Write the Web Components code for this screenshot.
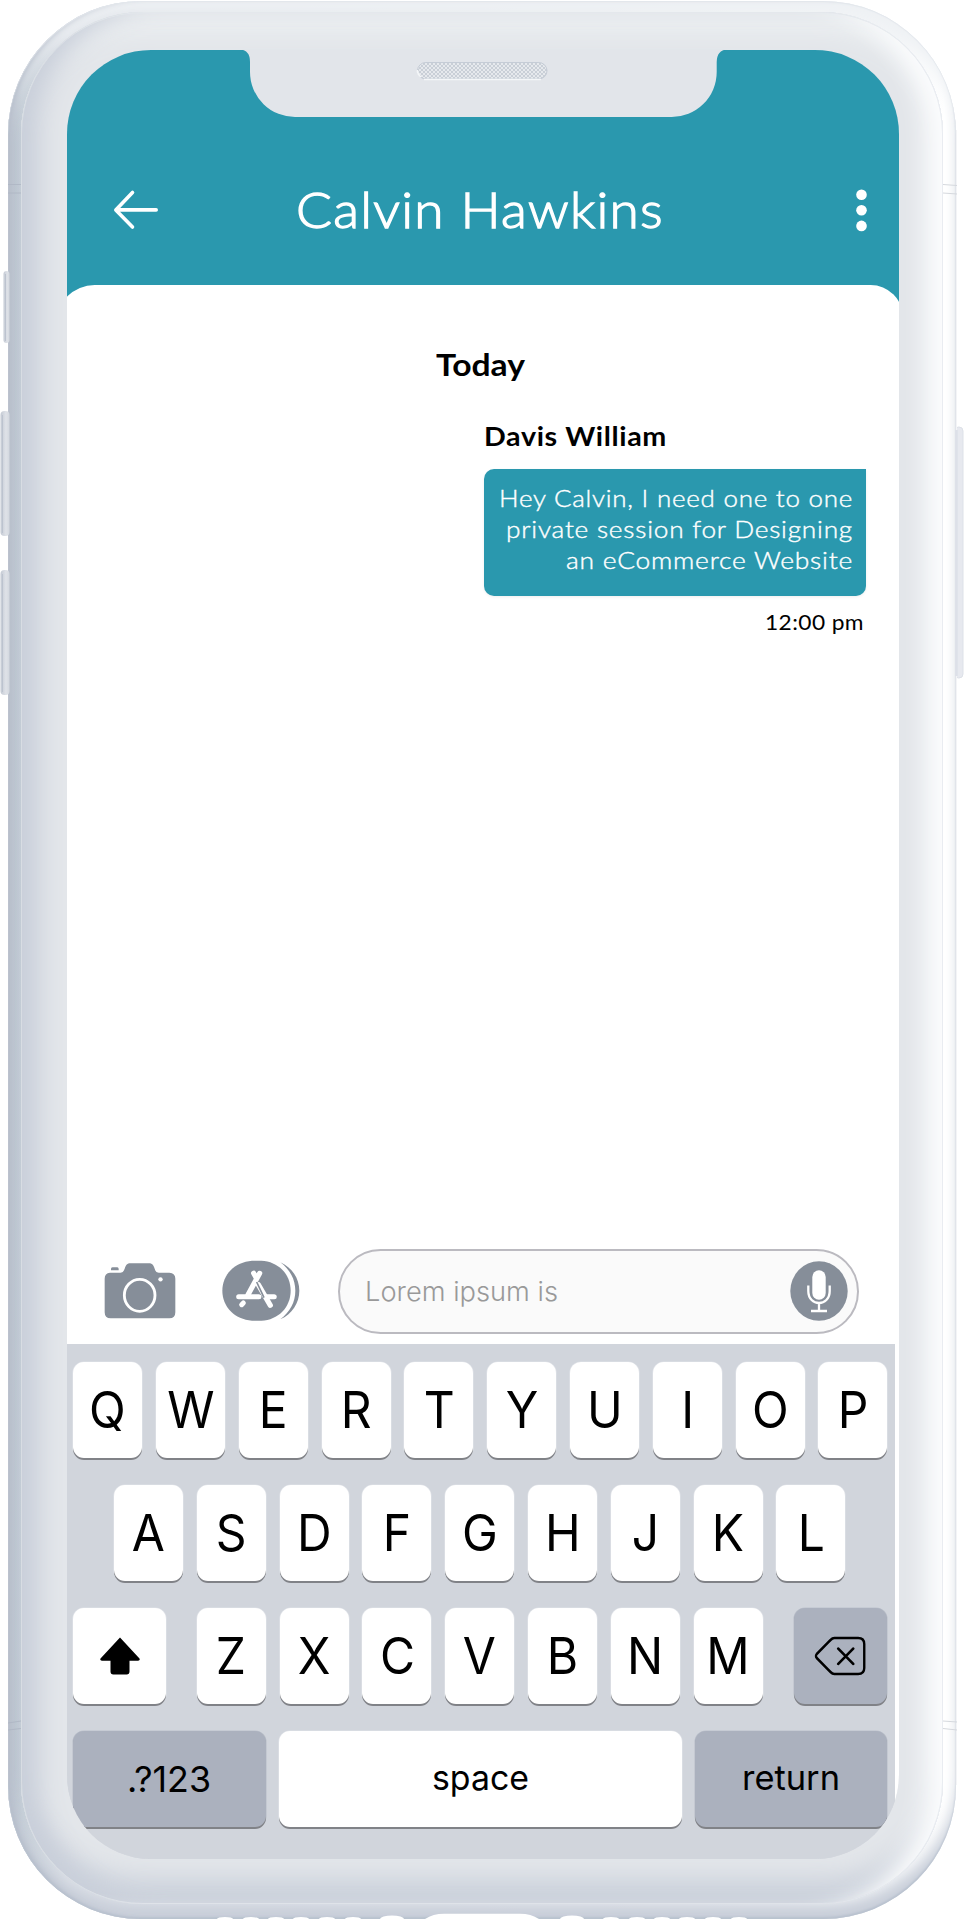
<!DOCTYPE html>
<html lang="en">
<head>
<meta charset="utf-8">
<title>Chat</title>
<style>
html,body{margin:0;padding:0;background:#fff}
body{width:965px;height:1919px;overflow:hidden;font-family:Lato,"Open Sans",sans-serif}
</style>
</head>
<body>
<phone-frame>
  <chat-header><fit-text w="368" style="font-size:50px;font-weight:300;letter-spacing:1.2px;-webkit-text-stroke:1.3px #fff">Calvin Hawkins</fit-text></chat-header>
  <chat-panel>
    <fit-text slot="day" w="89" style="font-size:30px;font-weight:700">Today</fit-text>
    <chat-message>
      <fit-text slot="author" w="183" style="font-size:27px;font-weight:700;letter-spacing:.6px">Davis William</fit-text>
      <fit-text w="354">Hey Calvin, I need one to one</fit-text>
      <fit-text w="347">private session for Designing</fit-text>
      <fit-text w="287">an eCommerce Website</fit-text>
      <fit-text slot="time" w="99" style="font-size:22px;letter-spacing:.4px">12:00 pm</fit-text>
    </chat-message>
    <message-composer slot="composer"><fit-text w="193">Lorem ipsum is</fit-text></message-composer>
  </chat-panel>
  <ios-keyboard></ios-keyboard>
</phone-frame>
<script>
class Base extends HTMLElement{
  constructor(){super();this.attachShadow({mode:'open'}).innerHTML=this.constructor.html;}
}
const def=(name,html,ready)=>customElements.define(name,class extends Base{
  static html=html;
  connectedCallback(){if(ready)ready.call(this)}
});

def('phone-frame',`<style>
:host{display:block;position:relative;width:965px;height:1919px;overflow:hidden}
.shell{box-sizing:border-box;width:948.5px;height:1917.5px;margin:1px 0 0 7.5px;position:absolute;top:0;left:0;border-radius:133px;padding:11px 13px 15px 13.5px;display:flex;
 background:linear-gradient(90deg,#b3bbc9 0,#b9c2ce 6px,#c5ced7 14px,#dfe3e9 60px,#e9ecf0 50%,#f4f6f8 890px,#fff 936px);
 box-shadow:inset 0 1px 1px #e3e7ec,inset 0 -2px 2px #b9c2cf,inset 7px 0 7px -4px #b0b8c6,inset 0 14px 14px -3px #eef1f4,inset 0 -18px 14px -3px #c8ced9}
.face{flex:1;border-radius:122px;background:#e3e6ea;
 box-shadow:inset 1px 0 0 #d8dde3,inset -1px 0 0 #e9ecf1,inset 0 1px 0 #e4e8ec,inset 0 -1px 0 #dfe3e9,inset -30px 0 22px -12px #fbfcfd,inset 24px 0 24px -6px #c9cfda,inset 0 -34px 24px -8px #ccd2dc,inset 0 24px 22px -4px #edf0f2}
.screen{position:absolute;left:66.500px;top:50px;width:832px;height:1808.5px;border-radius:84px;overflow:hidden;background:linear-gradient(#2a98ae 50%,#d1d5dc 50%);display:flex;flex-direction:column;transform:translateZ(0)}
svg{position:absolute;left:0;top:0}
</style>
<svg width="965" height="1919" viewBox="0 0 965 1919" fill="none">
 <rect x="954.5" y="427" width="8.500" height="251" rx="4" fill="#e7e9ef" stroke="#dde1e8"/>
 <path d="M956.500 130V1785" stroke="#f3f4f6"/>
</svg>
<div class="shell"><div class="face"></div></div>
<div class="screen"><slot></slot></div>
<svg width="965" height="1919" viewBox="0 0 965 1919" fill="none">
 <defs><pattern id="mesh" width="4" height="4" patternUnits="userSpaceOnUse"><rect width="4" height="4" fill="#e6e9ed"/><path d="M-1 -1L5 5M5 -1L-1 5" stroke="#c6ccd5" stroke-width=".9"/></pattern>
 <linearGradient id="k"><stop stop-color="#c3c9d3"/><stop offset=".6" stop-color="#dfe2e8"/><stop offset="1" stop-color="#d3d8df"/></linearGradient></defs>
 <path d="M240 49.500Q250 50 250 62V72A45 45 0 0 0 296 117H671A45 45 0 0 0 716.700 72V62Q717 50 727 49.500Z" fill="#e2e5ea"/>
 <rect x="417.500" y="62.500" width="129.500" height="16.500" rx="8.250" fill="url(#mesh)" stroke="#c5ccd6"/>
 <path d="M421 77Q417 74 417.500 70M424 79.500H541" stroke="#f4f6f8" stroke-width="1.500"/>
 <g fill="url(#k)"><rect x="3.500" y="271" width="6" height="72" rx="3"/><rect x=".5" y="411" width="9" height="125" rx="4"/><rect x=".5" y="570" width="9" height="125" rx="4"/></g>
 <path d="M5.500 274V341M2.500 415V533M2.500 574V692" stroke="#bcc3cf"/>
 <path d="M956.500 430V676" stroke="#dde0e8" stroke-width="2.500"/>
 <path d="M8 184.500H21M8 193H21M8 1723L21 1721M8 1730L21 1728.500" stroke="#adb5c3" stroke-width=".8"/>
 <path d="M943 184.500L957 185.500M943 193L957 194M943 1721L957 1722M943 1728.500L957 1730" stroke="#d5d8dd" stroke-width="1"/>
 <g fill="#fff"><path d="M425 1919Q433 1913.700 444 1913.700H520Q531 1913.700 539 1919Z"/>
 <ellipse cx="392" cy="1919" rx="12" ry="3.500"/><ellipse cx="572" cy="1919" rx="12" ry="3.500"/>
 <g id="d"><ellipse cx="225" cy="1919" rx="8" ry="2"/><ellipse cx="251" cy="1919" rx="8" ry="2"/><ellipse cx="276" cy="1919" rx="8" ry="2"/><ellipse cx="301" cy="1919" rx="8" ry="2"/><ellipse cx="327" cy="1919" rx="8" ry="2"/><ellipse cx="353" cy="1919" rx="8" ry="2"/></g><use href="#d" x="386"/></g>
</svg>`);

def('chat-header',`<style>
:host{display:grid;grid-template-columns:46px 1fr 11px;flex:none;box-sizing:border-box;height:235px;padding:128.500px 32px 0 46.500px;align-items:start;color:#fff}
svg{display:block}.t{line-height:60px;text-align:center;padding-right:54px}
</style>
<svg width="46" height="60" viewBox="0 0 46 60" fill="none" stroke="#fff" stroke-width="3.600" stroke-linecap="round" stroke-linejoin="round"><path d="M43.200 30.900H3M19.500 13.500L2.800 30.900L19.500 48"/></svg>
<div class="t"><slot></slot></div>
<svg width="11" height="60" viewBox="0 0 11 60" fill="#fff"><circle cx="5.500" cy="15.700" r="5.300"/><circle cx="5.500" cy="31.300" r="5.300"/><circle cx="5.500" cy="46.900" r="5.300"/></svg>`);

def('chat-panel',`<style>
:host{display:flex;flex:none;flex-direction:column;box-sizing:border-box;height:1058.500px;margin:0 -4px 0 -11px;padding:60.500px 4px 0 11px;background:#fff;border-radius:38.700px 32.400px 0 0;color:#000}
.day{text-align:center;line-height:36px;height:36px;padding-right:5px}
.c{margin-top:auto}
</style><div class="day"><slot name="day"></slot></div><slot></slot><div class="c"><slot name="composer"></slot></div>`);

def('chat-message',`<style>
:host{display:flex;flex-direction:column;width:382px;margin:38.500px 32.500px 0 auto}
.a{line-height:32px;height:32px;margin-bottom:17px}
.b{box-sizing:border-box;height:126.500px;padding:13px 13px 0 0;background:#2a98ae;border-radius:10px 0 10px 10px;color:#fff;font-size:24px;font-weight:300;-webkit-text-stroke:.4px #fff;letter-spacing:.7px;line-height:31px;display:flex;flex-direction:column;align-items:flex-end;box-shadow:0 1px 3px #0001}
.t{line-height:26px;margin-top:13px;text-align:right;padding-right:2px}
</style><div class="a"><slot name="author"></slot></div><div class="b"><slot></slot></div><div class="t"><slot name="time"></slot></div>`);

def('message-composer',`<style>
:host{display:flex;align-items:center;height:84.500px;padding:0 40px 9.500px 37.200px}
svg{display:block;flex:none}
.app{margin:0 38.300px 0 46px}
.cam,.app{position:relative;top:-1px}
.f{flex:1;box-sizing:border-box;height:85px;border:2px solid #bbbac0;border-radius:43px;background:#fafafa;display:flex;align-items:center;justify-content:space-between;padding:0 8.500px 1px 25px;font:300 27px Inter,sans-serif;color:#999}
</style>
<svg class="cam" width="72" height="61.330" viewBox="26 28 216 184"><path fill="#868e99" d="M47 54Q48 50 52 50H65Q69 50 70 54V59H47ZM44 66H72C82 66 84 63 88 54C92 43 95 38 106 38H160C171 38 174 43 178 54C181 63 184 66 194 66H222Q240 67 240 84V185Q240 203 222 203H46Q28 203 28 185V84Q28 67 44 66Z"/><ellipse cx="133" cy="134" rx="46" ry="48" fill="none" stroke="#fff" stroke-width="8.500"/><circle cx="195.500" cy="86" r="6.500" fill="#fff"/></svg>
<svg class="app" width="78" height="61.330" viewBox="380 28 234 184"><path fill="#868e99" d="M470 30H498C548 32 586 70 586 120C586 170 548 208 498 210H470C418 206 381 168 381 120C381 72 418 34 470 30Z"/><path fill="#868e99" d="M555 35C590 51 612 83 612 120C612 157 590 190 555 206C584 183 600 155 600 120C600 86 584 57 555 35Z"/><g fill="none" stroke="#fff" stroke-linecap="round"><path stroke-width="15" d="M430 138H491M515 138H537M439 162L444 157"/><path stroke-width="15.500" d="M493 68L458 132M475 68L483 82M489 102L525 164"/></g><path d="M484 94L506 141" stroke="#868e99" stroke-width="5" fill="none"/></svg>
<div class="f"><slot></slot><svg width="58" height="60" viewBox="0 0 58 60"><ellipse cx="29" cy="30" rx="28.700" ry="29.700" fill="#868e99"/><rect x="22.300" y="9.300" width="13.400" height="29.500" rx="6.700" fill="#fff"/><path d="M18.300 24.500V30C18.300 46 39.700 46 39.700 30V24.500M29 42V50M21 50H37" fill="none" stroke="#fff" stroke-width="2.300"/></svg></div>`);

def('key-cap',`<style>
:host{display:flex;flex:none;box-sizing:border-box;width:69px;height:96px;border-radius:11px;background:#fff;box-shadow:0 2px 0 #808287,0 0 0 .6px #e0e3e8;align-items:center;justify-content:center;font:400 50.500px/60px Inter,"Liberation Sans",sans-serif;color:#000}
:host([wide]){width:92.600px}:host([side]){width:192.400px}:host([grow]){flex:1}
:host([dark]){background:#abb1be;box-shadow:0 2px 0 #808287,0 0 0 .6px #bcc1cb}
span{display:block;transform:scaleX(.95)}
:host([word]) span{transform:none;font-size:35px}
::slotted(svg){display:block}
</style><span><slot></slot></span>`);

def('ios-keyboard',`<style>
:host{display:flex;flex:none;flex-direction:column;box-sizing:border-box;gap:27px;height:515px;padding:18px 11.300px 0 6.800px;background:linear-gradient(90deg,#d1d5dc 828px,#fff 828px)}
.r{display:flex;height:96.200px;gap:13.800px}
.r2{padding-left:40.700px}.z{margin-left:17.200px}.x{margin-left:17.500px}.r4{gap:13px}
.up{position:relative;top:-2px}
</style>
<div class="r" id="a"></div><div class="r r2" id="b"></div><div class="r" id="c"></div>
<div class="r r4"><key-cap side dark word><fit-text w="84" style="font-size:36px">.?123</fit-text></key-cap><key-cap grow word><fit-text class="up" w="97">space</fit-text></key-cap><key-cap side dark word><fit-text class="up" w="98">return</fit-text></key-cap></div>`,function(){
  const R=this.shadowRoot,row=s=>[...s].map(c=>`<key-cap>${c}</key-cap>`).join('');
  R.getElementById('a').innerHTML=row('QWERTYUIOP');
  R.getElementById('b').innerHTML=row('ASDFGHJKL');
  R.getElementById('c').innerHTML=`<key-cap wide><svg width="46" height="40" viewBox="0 0 46 40"><path d="M23 1.500L2.500 22.500Q1.500 24.500 4 24.800H13V35.500Q13 38.500 16 38.500H30Q33 38.500 33 35.500V24.800H42Q44.500 24.500 43.500 22.500Z" stroke-linejoin="round"/></svg></key-cap>`
   +row('ZXCVBNM').replace('<key-cap','<key-cap class="z"')
   +`<key-cap wide dark class="x"><svg width="55" height="40" viewBox="0 0 55 40" fill="none" stroke="#000" stroke-width="2.500" stroke-linecap="round" stroke-linejoin="round"><path d="M21 2H46Q52.500 2 52.500 8V32Q52.500 38 46 38H21Q19 38 17 36L2.500 22Q.8 20 2.500 18L17 4Q19 2 21 2ZM25 12.500L41 28M41 12.500L25 28"/></svg></key-cap>`;
});

/* one line of text stretched to a given width; defined last so that the
   font set by the surrounding elements is in place when it is measured */
def('fit-text',`<style>:host{display:inline-block;white-space:nowrap;text-align:left}
span{display:inline-block;transform-origin:0 50%}</style><span><slot></slot></span>`,function(){
  const w=+this.getAttribute('w'),s=this.shadowRoot.querySelector('span');
  const n=s.getBoundingClientRect().width;
  if(n){s.style.width=n+'px';s.style.marginRight=w-n+'px';s.style.transform='scaleX('+w/n+')';this.style.width=w+'px';}
});
</script>
</body>
</html>
